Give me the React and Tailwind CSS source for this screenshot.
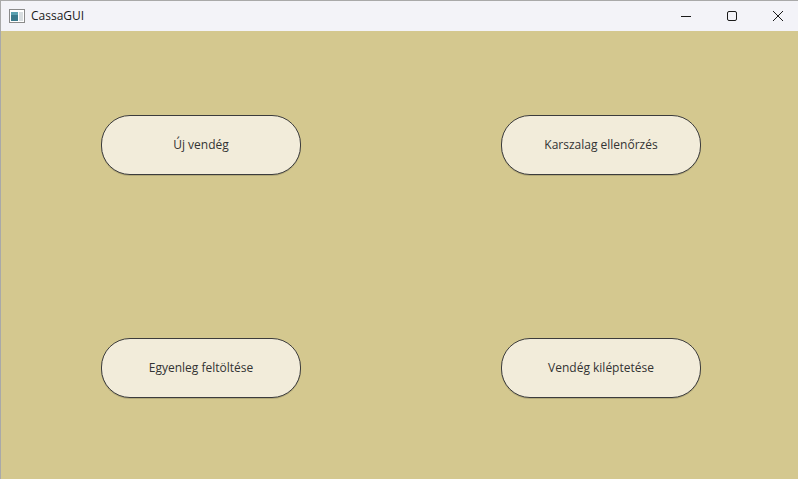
import React from "react";

function Btn({ children }) {
  return (
    <div className="flex items-center justify-center">
      <button className="w-[200px] h-[60px] rounded-[29px] border border-[#3c3c3c] bg-[#f2ecda] text-[12px] text-[#333333] [font-family:'Open_Sans',sans-serif] shadow-[0_1px_0_rgba(0,0,0,0.15)]">
        {children}
      </button>
    </div>
  );
}

export default function App() {
  return (
    <div className="w-[798px] h-[479px] flex flex-col border-l border-t border-[#a9a9a9] bg-[#d4c88f] overflow-hidden [font-family:'Open_Sans',sans-serif]">
      <div className="h-[30px] bg-[#f3f3f8] flex items-center shrink-0">
        <div className="ml-[8px] w-[16px] h-[14px] flex items-center">
          <svg width="16" height="14" viewBox="0 0 16 14">
            <rect x="0.5" y="0.5" width="15" height="13" fill="#ffffff" stroke="#8a8a8a" />
            <rect x="2" y="3" width="7" height="9" fill="#3c7a8c" />
            <rect x="2" y="3" width="7" height="3" fill="#5aa0b0" />
            <rect x="10" y="3" width="4" height="9" fill="#d8dde0" />
          </svg>
        </div>
        <span className="ml-[6px] text-[12px] text-[#1a1a1a]">CassaGUI</span>
        <div className="ml-auto mr-[-3px] flex items-center h-full">
          <div className="w-[46px] h-full flex items-center justify-center">
            <svg width="12" height="12" viewBox="0 0 12 12"><line x1="1" y1="6.5" x2="11" y2="6.5" stroke="#1a1a1a" strokeWidth="1" /></svg>
          </div>
          <div className="w-[46px] h-full flex items-center justify-center">
            <svg width="12" height="12" viewBox="0 0 12 12"><rect x="1.5" y="1.5" width="9" height="9" rx="1.5" fill="none" stroke="#1a1a1a" strokeWidth="1" /></svg>
          </div>
          <div className="w-[46px] h-full flex items-center justify-center">
            <svg width="12" height="12" viewBox="0 0 12 12"><path d="M1 1L11 11M11 1L1 11" stroke="#1a1a1a" strokeWidth="1" /></svg>
          </div>
        </div>
      </div>
      <div className="flex-1 w-[800px] pt-[2px] grid grid-cols-2 grid-rows-2">
        <Btn>Új vendég</Btn>
        <Btn>Karszalag ellenőrzés</Btn>
        <Btn>Egyenleg feltöltése</Btn>
        <Btn>Vendég kiléptetése</Btn>
      </div>
    </div>
  );
}
